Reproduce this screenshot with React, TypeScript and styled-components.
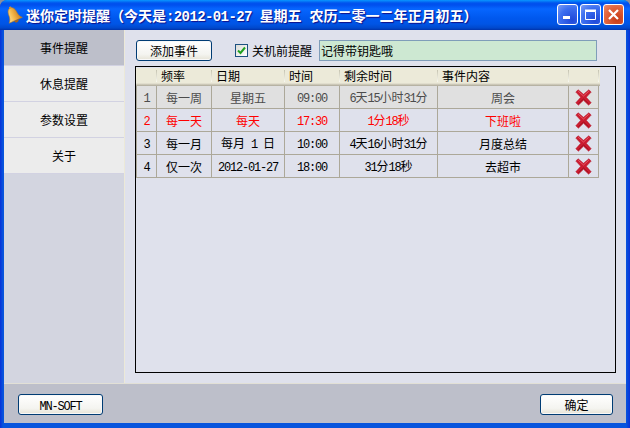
import React from 'react';
import styled, { createGlobalStyle } from 'styled-components';

const cjk = '"Noto Sans CJK SC", "Liberation Sans", sans-serif';

const GlobalStyle = createGlobalStyle`
  html, body {
    margin: 0;
    padding: 0;
    background: #8a8f9c;
    overflow: hidden;
  }
`;

const Win = styled.div`
  width: 630px;
  height: 428px;
  display: flex;
  flex-direction: column;
  box-sizing: border-box;
  padding: 0 4px 5px;
  border-radius: 7px 7px 0 0;
  background: linear-gradient(90deg, #0831d9 0, #0855dd 3px, #0855dd 626px, #0831d9 100%);
  font-family: ${cjk};
  font-size: 12px;
  color: #000;
`;

const TitleBar = styled.div`
  height: 30px;
  margin: 0 -4px;
  padding: 0 6px 0 5px;
  display: flex;
  align-items: center;
  border-radius: 7px 7px 0 0;
  background: linear-gradient(180deg, #0997ff 0, #0053ee 3px, #0050ee 5px, #0666ff 9px, #0058ee 18px, #0055e5 24px, #0048cc 28px, #0033aa 30px);
`;

const Title = styled.div`
  flex: 1;
  margin-left: 3px;
  margin-top: 1px;
  color: #fff;
  font-size: 14px;
  font-weight: 700;
  line-height: 18px;
  white-space: pre;
  text-shadow: 1px 1px 1px #0f1089;
`;

const TitleNum = styled.span`
  font-family: "Liberation Mono", monospace;
  letter-spacing: -0.6px;
`;

const Controls = styled.div`
  display: flex;
  gap: 2px;
  margin-top: -2px;
`;

const Ctrl = styled.div<{ $close?: boolean }>`
  width: 21px;
  height: 21px;
  box-sizing: border-box;
  border: 1px solid #fff;
  border-radius: 3px;
  display: flex;
  align-items: center;
  justify-content: center;
  background: ${(p) =>
    p.$close
      ? 'radial-gradient(circle at 70% 75%, #c63a16 0, #e2643c 60%, #e98b6d 100%)'
      : 'radial-gradient(circle at 75% 80%, #1f48d8 0, #3c6ff0 60%, #7d9ef5 100%)'};
`;

const Body = styled.div`
  flex: 1;
  display: flex;
  flex-direction: column;
  min-height: 0;
`;

const Content = styled.div`
  flex: 1;
  display: flex;
  min-height: 0;
  background: #dfe1ec;
`;

const Sidebar = styled.div`
  width: 120px;
  background: #d3d5e0;
  border-right: 1px solid #ece9d8;
`;

const SideItem = styled.div<{ $active?: boolean }>`
  height: 35px;
  margin-bottom: 1px;
  display: flex;
  align-items: center;
  justify-content: center;
  font-size: 12px;
  background: ${(p) => (p.$active ? '#bdbfca' : '#ececec')};
  box-shadow: 0 1px 0 #d2d2e2;
`;

const Main = styled.div`
  flex: 1;
  min-width: 0;
  display: flex;
  flex-direction: column;
  padding: 10px;
`;

const Toolbar = styled.div`
  height: 21px;
  margin-bottom: 5px;
  padding-left: 1px;
  display: flex;
  align-items: center;
`;

const Btn = styled.button<{ $w: number }>`
  width: ${(p) => p.$w}px;
  height: 21px;
  padding: 0;
  box-sizing: border-box;
  border: 1px solid #003c74;
  border-radius: 3px;
  background: linear-gradient(180deg, #fff 0, #f4f4f0 70%, #e6e3d6 100%);
  box-shadow: inset 0 0 0 1px #f8f8f8;
  font-family: ${cjk};
  font-size: 12px;
  color: #000;
`;

const CheckLabel = styled.div`
  margin-left: 23px;
  display: flex;
  align-items: center;
  white-space: nowrap;
`;

const CheckBox = styled.div`
  width: 13px;
  height: 13px;
  margin-right: 4px;
  box-sizing: border-box;
  border: 1px solid #1c5180;
  background: linear-gradient(135deg, #dcdcd7, #fff);
  display: flex;
  align-items: center;
  justify-content: center;
`;

const Note = styled.input`
  width: 278px;
  height: 21px;
  margin-left: 7px;
  box-sizing: border-box;
  padding: 0 1px;
  border: 1px solid #7f9db9;
  background: #cde8d2;
  font-family: ${cjk};
  font-size: 12px;
  color: #000;
  outline: none;
`;

const Panel = styled.div`
  flex: 1;
  box-sizing: border-box;
  border: 1px solid #000;
  padding-top: 1px;
  background: #dfe1ec;
`;

const cols = '20px 55px 73px 55px 98px 131px 30px';

const HeadRow = styled.div`
  display: grid;
  grid-template-columns: ${cols};
  width: 463px;
  height: 18px;
  padding-left: 1px;
  box-sizing: content-box;
  background: linear-gradient(180deg, #ecead9 0, #ecead9 15px, #d6d2c2 16px, #aca899 18px);
`;

const HeadCell = styled.div`
  height: 15px;
  padding-left: 4px;
  display: flex;
  align-items: center;
  line-height: 15px;
  border-right: 1px solid #fff;
  border-image: linear-gradient(180deg, transparent 3px, #c7c5b2 3px, #f8f8f0 13px, transparent 13px) 1;
`;

const Row = styled.div<{ $bg: string; $color: string }>`
  display: grid;
  grid-template-columns: ${cols};
  width: 463px;
  height: 23px;
  box-sizing: border-box;
  border-left: 1px solid #aca899;
  border-bottom: 1px solid #aca899;
  background: ${(p) => p.$bg};
  color: ${(p) => p.$color};
`;

const Cell = styled.div`
  display: flex;
  align-items: center;
  justify-content: center;
  white-space: pre;
  border-right: 1px solid #aca899;
`;

const Num = styled.span`
  font-family: "Liberation Mono", monospace;
  letter-spacing: -1.2px;
`;

const DeleteSvg = styled.svg`
  width: 17px;
  height: 17px;
  margin-right: 1px;
`;

const Footer = styled.div`
  height: 40px;
  box-sizing: border-box;
  border-top: 1px solid #e2e0d6;
  padding: 10px 13px 8px 14px;
  display: flex;
  justify-content: space-between;
  background: #bdbfca;
`;

const numPattern = /([0-9:\- ]+)/;

// digits and dashes in the old bitmap font are half width, so they go in a mono span
const mixed = (text: string, Wrap: typeof Num = Num) =>
  text.split(numPattern).map((part, i) =>
    i % 2 === 1 ? <Wrap key={i}>{part}</Wrap> : part
  );

const Bell = () => (
  <svg width="18" height="20" viewBox="0 0 16 18">
    <defs>
      <linearGradient id="bellBody" x1="0" y1="0" x2="1" y2="0">
        <stop offset="0" stopColor="#fde6a0" />
        <stop offset="0.45" stopColor="#f5b94c" />
        <stop offset="1" stopColor="#c8781c" />
      </linearGradient>
    </defs>
    <g transform="rotate(-24 8 9)">
      <circle cx="7.5" cy="1.8" r="1.2" fill="#d99a3a" />
      <path d="M7.5 2 C4.5 2 3.8 5 3.6 8 C3.4 11 2.4 12.6 1 14 L14 14 C12.6 12.6 11.6 11 11.4 8 C11.2 5 10.5 2 7.5 2 Z" fill="url(#bellBody)" stroke="#b87a24" strokeWidth="0.5" />
      <path d="M6 14.2 A2 2 0 0 0 10 14.2 Z" fill="#a8641a" />
    </g>
  </svg>
);

const DeleteIcon = () => (
  <DeleteSvg viewBox="0 0 18 18">
    <path d="M0.8 3.2 L3.4 0.8 L9 5.6 L14.6 0.8 L17.2 3.2 L12 8.8 L17.2 14.6 L14.4 17.2 L9 12 L3.6 17.2 L0.8 14.6 L6 8.8 Z" fill="#cb1c30" stroke="#b21a2c" strokeWidth="0.5" strokeLinejoin="round" />
    <path d="M3.4 2.4 L9 7.4 L14.6 2.4" fill="none" stroke="#e85a68" strokeWidth="1" />
    <path d="M3.6 15.6 L9 10.6 L14.4 15.6" fill="none" stroke="#9a1020" strokeWidth="1" />
  </DeleteSvg>
);

const rows = [
  { bg: '#e0e0e0', color: '#4c4c4c', cells: ['1', '每一周', '星期五', '09:00', '6天15小时31分', '周会'] },
  { bg: '#dfe1ec', color: '#ff0000', cells: ['2', '每一天', '每天', '17:30', '1分18秒', '下班啦'] },
  { bg: '#dfe1ec', color: '#000', cells: ['3', '每一月', '每月 1 日', '10:00', '4天16小时31分', '月度总结'] },
  { bg: '#dfe1ec', color: '#000', cells: ['4', '仅一次', '2012-01-27', '18:00', '31分18秒', '去超市'] },
];

const heads = ['', '频率', '日期', '时间', '剩余时间', '事件内容', ''];
const navItems = ['事件提醒', '休息提醒', '参数设置', '关于'];

const App = () => {
  return (
    <Win>
      <GlobalStyle />
      <TitleBar>
        <Bell />
        <Title>{mixed('迷你定时提醒（今天是:2012-01-27 星期五 农历二零一二年正月初五）', TitleNum)}</Title>
        <Controls>
          <Ctrl>
            <svg width="11" height="11" viewBox="0 0 11 11"><rect x="1" y="7" width="7" height="3" fill="#fff" /></svg>
          </Ctrl>
          <Ctrl>
            <svg width="13" height="13" viewBox="0 0 13 13"><path d="M1.5 3.5 H11.5 V11.5 H1.5 Z" fill="none" stroke="#fff" /><rect x="1" y="1.5" width="11" height="2" fill="#fff" /></svg>
          </Ctrl>
          <Ctrl $close>
            <svg width="13" height="13" viewBox="0 0 13 13"><path d="M2 2 L11 11 M11 2 L2 11" stroke="#fff" strokeWidth="2.2" /></svg>
          </Ctrl>
        </Controls>
      </TitleBar>
      <Body>
        <Content>
          <Sidebar>
            {navItems.map((item, i) => (
              <SideItem key={item} $active={i === 0}>{item}</SideItem>
            ))}
          </Sidebar>
          <Main>
            <Toolbar>
              <Btn $w={76}>添加事件</Btn>
              <CheckLabel>
                <CheckBox>
                  <svg width="9" height="9" viewBox="0 0 9 9"><path d="M1 4.5 L3.5 7 L8 1.5" fill="none" stroke="#21a121" strokeWidth="2" /></svg>
                </CheckBox>
                关机前提醒
              </CheckLabel>
              <Note defaultValue="记得带钥匙哦" />
            </Toolbar>
            <Panel>
              <HeadRow>
                {heads.map((h, i) => (
                  <HeadCell key={i}>{h}</HeadCell>
                ))}
              </HeadRow>
              {rows.map((row) => (
                <Row key={row.cells[0]} $bg={row.bg} $color={row.color}>
                  {row.cells.map((c, i) => (
                    <Cell key={i}><span>{mixed(c)}</span></Cell>
                  ))}
                  <Cell><DeleteIcon /></Cell>
                </Row>
              ))}
            </Panel>
          </Main>
        </Content>
        <Footer>
          <Btn $w={85}><Num>MN-SOFT</Num></Btn>
          <Btn $w={73}>确定</Btn>
        </Footer>
      </Body>
    </Win>
  );
};

export default App;
